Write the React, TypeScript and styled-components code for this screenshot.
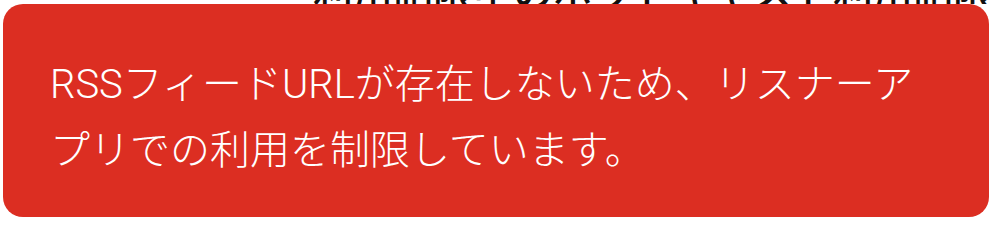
import React from "react";
import styled, { createGlobalStyle } from "styled-components";

const GlobalStyle = createGlobalStyle`
  html, body {
    margin: 0;
    padding: 0;
    background: #ffffff;
  }
  body {
    font-family: "Noto Sans CJK JP", sans-serif;
    overflow: hidden;
  }
`;

const Page = styled.div`
  display: flex;
  flex-direction: column;
  width: 996px;
  height: 224px;
  padding: 0 7px 0 3px;
  box-sizing: border-box;
`;

// heading that scrolled up under the top edge; only its foot still shows
const HeadingClip = styled.div`
  height: 4px;
  overflow: hidden;
  display: flex;
  align-items: flex-end;
  padding-left: 310px;
`;

const Heading = styled.h2`
  margin: 0 0 -6px 0;
  font-size: 40px;
  line-height: 1;
  font-weight: 500;
  color: #111111;
  white-space: nowrap;
`;

const Notice = styled.div`
  background: #dc2e22;
  border-radius: 20px;
  padding: 46px 47px 42px 47px;
  box-sizing: border-box;
  height: 213px;
`;

const NoticeText = styled.p`
  margin: 0;
  color: #ffffff;
  font-size: 40px;
  line-height: 62px;
  font-weight: 300;
`;

// latin runs are set wider than the CJK face's own latin glyphs
const Latin = styled.span`
  font-family: Roboto, "Noto Sans CJK JP", sans-serif;
  font-weight: 300;
`;

const App = () => {
  return (
    <>
      <GlobalStyle />
      <Page>
        <HeadingClip>
          <Heading>利用制限中のポッドキャスト利用制限中</Heading>
        </HeadingClip>
        <Notice>
          <NoticeText>
            <Latin>RSS</Latin>フィード<Latin>URL</Latin>
            が存在しないため、リスナーアプリでの利用を制限しています。
          </NoticeText>
        </Notice>
      </Page>
    </>
  );
};

export default App;
